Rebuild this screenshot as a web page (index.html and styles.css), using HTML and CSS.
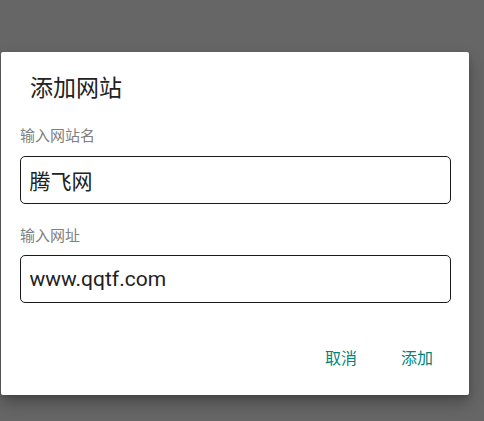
FILE: index.html
```html
<!DOCTYPE html>
<html lang="zh">
<head>
<meta charset="utf-8">
<link rel="stylesheet" href="styles.css">
</head>
<body>
<div class="dialog">
  <div class="title">添加网站</div>
  <div class="label label-first">输入网站名</div>
  <input class="field field-first" type="text" value="腾飞网">
  <div class="label label-second">输入网址</div>
  <input class="field field-second" type="text" value="www.qqtf.com">
  <div class="actions">
    <span class="btn">取消</span>
    <span class="btn">添加</span>
  </div>
</div>
</body>
</html>
```

FILE: styles.css
```css
html, body {
  margin: 0;
  padding: 0;
}
body {
  background: #666666;
  width: 484px;
  height: 421px;
  overflow: hidden;
  font-family: Roboto, "Noto Sans CJK SC", sans-serif;
}
.dialog {
  margin: 52px 0 0 1px;
  width: 468px;
  height: 343px;
  box-sizing: border-box;
  background: #ffffff;
  border-radius: 2px;
  box-shadow: 0 8px 16px rgba(0, 0, 0, 0.28), 0 2px 4px rgba(0, 0, 0, 0.15);
  padding: 0 19px;
  display: flex;
  flex-direction: column;
}
.title {
  margin-top: 22px;
  padding-left: 10px;
  font-size: 23px;
  line-height: 30px;
  color: #222222;
}
.label {
  font-size: 15px;
  line-height: 20px;
  color: #808080;
}
.label-first {
  margin-top: 22px;
}
.label-second {
  margin-top: 22px;
}
.field {
  display: block;
  box-sizing: border-box;
  width: 431px;
  height: 48px;
  margin: 10px 0 0 0;
  padding: 0 0 0 8.5px;
  border: 1.5px solid #1a1a1a;
  border-radius: 5px;
  outline: none;
  background: #ffffff;
  font-family: Roboto, "Noto Sans CJK SC", sans-serif;
  font-size: 21px;
  color: #222222;
}
.field-second {
  margin-top: 9px;
}
.actions {
  margin-top: 38px;
  display: flex;
  justify-content: flex-end;
  gap: 12px;
  padding-right: 1px;
}
.btn {
  padding: 0 16px;
  font-size: 16px;
  line-height: 36px;
  color: #00857a;
}
```
